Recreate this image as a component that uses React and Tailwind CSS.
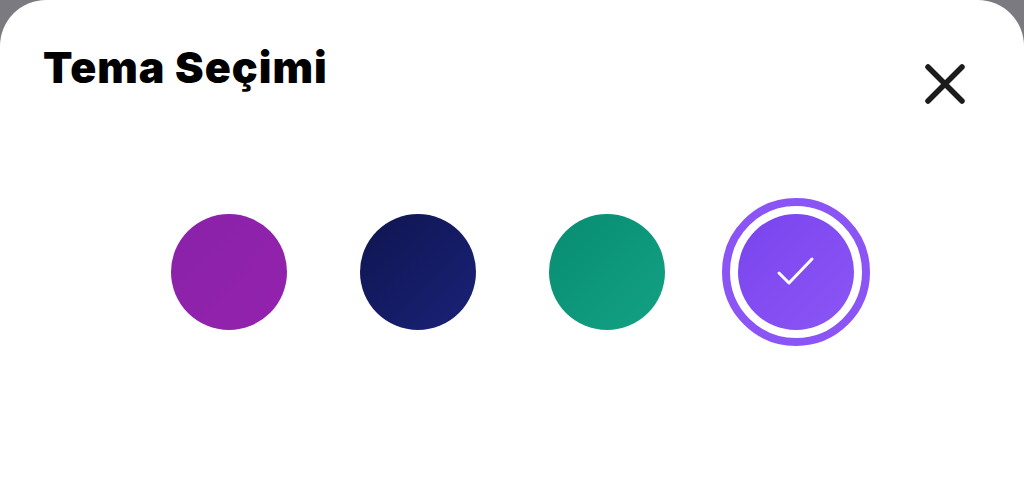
import React, { useState } from 'react'

const themes = [
  { id: 'purple', className: 'bg-gradient-to-br from-[#8a22a8] to-[#9422ae]' },
  { id: 'navy', className: 'bg-gradient-to-br from-[#0f1550] to-[#1a2278]' },
  { id: 'green', className: 'bg-gradient-to-br from-[#078c72] to-[#13a283]' },
  { id: 'violet', className: 'bg-gradient-to-br from-[#7a44ee] to-[#8b55f5]' },
]

export default function App() {
  const [selected, setSelected] = useState('violet')

  return (
    <div className="h-[493px] w-full overflow-hidden bg-[#7a7a80]">
      <div className="h-full rounded-t-[46px] bg-white">
        {/* Header */}
        <div className="flex items-start justify-between pl-[43px] pr-[58px] pt-[42px]">
          <h2
            className="text-[43px] font-black leading-[50px] tracking-[1px] text-black"
            style={{ fontFamily: 'Inter, "Noto Sans", sans-serif' }}
          >
            Tema Seçimi
          </h2>
          <button className="mt-[21px] text-[#1c1c1e]" aria-label="Kapat">
            <svg width="42" height="42" viewBox="0 0 42 42" fill="none">
              <path
                d="M4 4L38 38M38 4L4 38"
                stroke="currentColor"
                strokeWidth="5.5"
                strokeLinecap="round"
              />
            </svg>
          </button>
        </div>

        {/* Swatches */}
        <div className="mt-[109px] flex justify-center gap-[73px]">
          {themes.map((theme) => (
            <button
              key={theme.id}
              onClick={() => setSelected(theme.id)}
              className={
                'flex h-[116px] w-[116px] items-center justify-center rounded-full ' +
                theme.className +
                (selected === theme.id
                  ? ' outline-[8px] outline-offset-[8px] outline-solid outline-[#8b55f5]'
                  : '')
              }
            >
              {selected === theme.id && (
                <svg width="40" height="40" viewBox="0 0 40 40" fill="none">
                  <path
                    d="M3 21L13 31L36 7"
                    stroke="white"
                    strokeWidth="3"
                    strokeLinecap="round"
                    strokeLinejoin="round"
                  />
                </svg>
              )}
            </button>
          ))}
        </div>
      </div>
    </div>
  )
}
